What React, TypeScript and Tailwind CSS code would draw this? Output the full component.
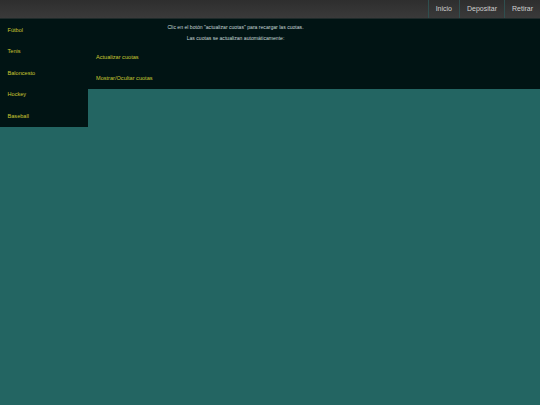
const sports = ['Fútbol', 'Tenis', 'Baloncesto', 'Hockey', 'Baseball'];
const navLinks = ['Inicio', 'Depositar', 'Retirar'];

export default function App() {
  return (
    <div className="min-h-[405px] bg-[#236562] font-['Liberation_Sans',sans-serif]">
      {/* Top bar */}
      <div className="flex h-[19px] justify-end bg-gradient-to-b from-[#2e2e2e] to-[#3a3a3a] border-b border-[#1f2a2a]">
        {navLinks.map((link) => (
          <a key={link} className="flex items-center border-l border-[#2f4f4f] px-[7px] text-[7px] text-[#d0d0d0]">
            {link}
          </a>
        ))}
      </div>

      <div className="flex items-start">
        {/* Sports menu */}
        <div className="flex h-[108px] w-[88px] shrink-0 flex-col bg-[#011414] pl-[7.5px]">
          {sports.map((sport) => (
            <a key={sport} className="flex h-[21.5px] items-center text-[5.6px] text-[#c8c832]">
              {sport}
            </a>
          ))}
        </div>

        {/* Odds panel */}
        <div className="h-[70px] flex-1 bg-[#011414]">
          <div className="w-[295px] pt-[5px] text-center text-[5.1px] text-[#c8d8d8]">
            <p className="h-[11px] leading-[6px]">Clic en el botón "actualizar cuotas" para recargar las cuotas.</p>
            <p className="leading-[6px]">Las cuotas se actualizan automáticamente:</p>
          </div>
          <div className="flex flex-col pl-2 pt-[5.5px]">
            <a className="flex h-[21px] items-center whitespace-nowrap text-[5.6px] text-[#c8c832]">Actualizar cuotas</a>
            <a className="flex h-[21px] items-center whitespace-nowrap text-[5.6px] text-[#c8c832]">Mostrar/Ocultar cuotas</a>
          </div>
        </div>
      </div>
    </div>
  );
}
